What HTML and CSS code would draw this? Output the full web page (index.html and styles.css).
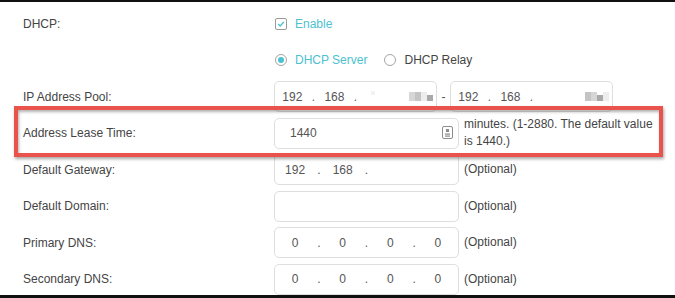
FILE: index.html
```html
<!DOCTYPE html>
<html>
<head>
<meta charset="utf-8">
<link rel="stylesheet" href="styles.css">
</head>
<body>
<div class="frame">
  <div class="form">
    <div class="row">
      <div class="label">DHCP:</div>
      <div class="ctrl">
        <span class="check"><svg viewBox="0 0 12 12" width="12" height="12"><rect x="0.5" y="0.5" width="11" height="11" rx="1.5" fill="#fff" stroke="#9a9a9a"/><path d="M3.2 6.1 L5.1 8 L8.9 4.1" fill="none" stroke="#4cc1cf" stroke-width="1.4"/></svg></span>
        <span class="opt teal">Enable</span>
      </div>
    </div>
    <div class="row">
      <div class="label"></div>
      <div class="ctrl">
        <span class="radio on"></span><span class="opt teal">DHCP Server</span>
        <span class="radio"></span><span class="opt">DHCP Relay</span>
      </div>
    </div>
    <div class="row">
      <div class="label">IP Address Pool:</div>
      <div class="ctrl">
        <div class="ip narrow">
          <span class="seg">192</span><span class="dot">.</span><span class="seg">168</span><span class="dot">.</span><span class="seg"><span class="faint"></span></span><span class="dot"></span><span class="seg"><span class="blur"><i class="b1"></i><i class="b2"></i><i class="b3"></i><i class="b4"></i></span></span>
        </div>
        <span class="dash">-</span>
        <div class="ip narrow">
          <span class="seg">192</span><span class="dot">.</span><span class="seg">168</span><span class="dot">.</span><span class="seg"></span><span class="dot"></span><span class="seg"><span class="blur"><i class="b2"></i><i class="b1"></i><i class="b4"></i><i class="b3"></i></span></span>
        </div>
      </div>
    </div>
    <div class="row">
      <div class="label">Address Lease Time:</div>
      <div class="ctrl">
        <div class="field lease">
          <span class="val">1440</span>
          <svg class="spin" viewBox="0 0 11 13" width="11" height="13"><rect x="0.5" y="0.5" width="10" height="12" rx="1.5" fill="#fff" stroke="#8c8c8c"/><rect x="4" y="3" width="3" height="3" fill="#8c8c8c"/><rect x="3" y="7.5" width="5" height="1.2" fill="#8c8c8c"/><rect x="3" y="9.5" width="5" height="1.2" fill="#8c8c8c"/></svg>
        </div>
        <span class="note wrap">minutes. (1-2880. The default value is 1440.)</span>
      </div>
    </div>
    <div class="row">
      <div class="label">Default Gateway:</div>
      <div class="ctrl">
        <div class="ip">
          <span class="seg">192</span><span class="dot">.</span><span class="seg">168</span><span class="dot">.</span><span class="seg"></span><span class="dot"></span><span class="seg"></span>
        </div>
        <span class="note">(Optional)</span>
      </div>
    </div>
    <div class="row">
      <div class="label">Default Domain:</div>
      <div class="ctrl">
        <div class="field"></div>
        <span class="note">(Optional)</span>
      </div>
    </div>
    <div class="row">
      <div class="label">Primary DNS:</div>
      <div class="ctrl">
        <div class="ip">
          <span class="seg">0</span><span class="dot">.</span><span class="seg">0</span><span class="dot">.</span><span class="seg">0</span><span class="dot">.</span><span class="seg">0</span>
        </div>
        <span class="note">(Optional)</span>
      </div>
    </div>
    <div class="row">
      <div class="label">Secondary DNS:</div>
      <div class="ctrl">
        <div class="ip">
          <span class="seg">0</span><span class="dot">.</span><span class="seg">0</span><span class="dot">.</span><span class="seg">0</span><span class="dot">.</span><span class="seg">0</span>
        </div>
        <span class="note">(Optional)</span>
      </div>
    </div>
  </div>
  <div class="highlight"></div>
</div>
</body>
</html>
```

FILE: styles.css
```css
html, body {
  margin: 0;
  padding: 0;
  background: #fff;
}
body {
  font-family: "Liberation Sans", Arial, sans-serif;
  font-size: 12px;
  color: #444;
}
.frame {
  position: relative;
  width: 675px;
  height: 298px;
  box-sizing: border-box;
  border-top: 2px solid #111;
  border-bottom: 3px solid #111;
  overflow: hidden;
}
.form {
  padding-top: 3.25px;
}
.row {
  display: grid;
  grid-template-columns: 274px 1fr;
  height: 36.5px;
  align-items: center;
}
.label {
  padding-left: 23px;
}
.ctrl {
  display: flex;
  align-items: center;
}
.check {
  display: flex;
  margin-left: 1px;
  margin-right: 8px;
}
.teal {
  color: #4cc1cf;
}
.radio {
  width: 10px;
  height: 10px;
  border: 1px solid #a5a5a5;
  border-radius: 50%;
  margin-left: 1px;
  margin-right: 8px;
  position: relative;
  box-sizing: content-box;
}
.radio.on::after {
  content: "";
  position: absolute;
  left: 2px;
  top: 2px;
  width: 6px;
  height: 6px;
  border-radius: 50%;
  background: #4cc1cf;
}
.radio + .opt.teal {
  margin-right: 16px;
}
.ip, .field {
  box-sizing: border-box;
  width: 185px;
  height: 31px;
  border: 1px solid #dedede;
  border-radius: 5px;
  display: flex;
  align-items: center;
  background: #fff;
}
.ip.narrow {
  width: 163px;
}
.seg {
  flex: 1;
  text-align: center;
  color: #555;
  display: flex;
  justify-content: center;
  align-items: center;
}
.dot {
  width: 7.5px;
  text-align: center;
  color: #555;
}
.dash {
  width: 13px;
  text-align: center;
  color: #555;
}
.blur {
  display: flex;
  filter: blur(0.6px);
  margin-left: 4px;
}
.blur i {
  display: block;
  width: 6px;
  height: 9px;
}
.blur .b1 { background: #d6d6d6; }
.blur .b2 { background: #c4c4c4; }
.blur .b3 { background: #ededed; }
.blur .b4 { background: #a9a9a9; height: 6px; margin-top: 3px; }
.faint {
  display: block;
  width: 4px;
  height: 4px;
  background: #f2f2f2;
  margin-left: -8px;
  margin-bottom: 8px;
}
.lease {
  justify-content: space-between;
  padding: 0 5px 0 15px;
}
.val {
  color: #555;
}
.spin {
  display: block;
  margin-top: -1px;
}
.note {
  margin-left: 5px;
  line-height: 17px;
}
.note.wrap {
  width: 194px;
}
.highlight {
  position: absolute;
  left: 14px;
  top: 104px;
  width: 649px;
  height: 51px;
  box-sizing: border-box;
  border: 4px solid #e9534b;
  box-shadow: 1px 2px 3px rgba(0,0,0,0.35), inset 1px 2px 3px rgba(0,0,0,0.3);
  pointer-events: none;
}
```
